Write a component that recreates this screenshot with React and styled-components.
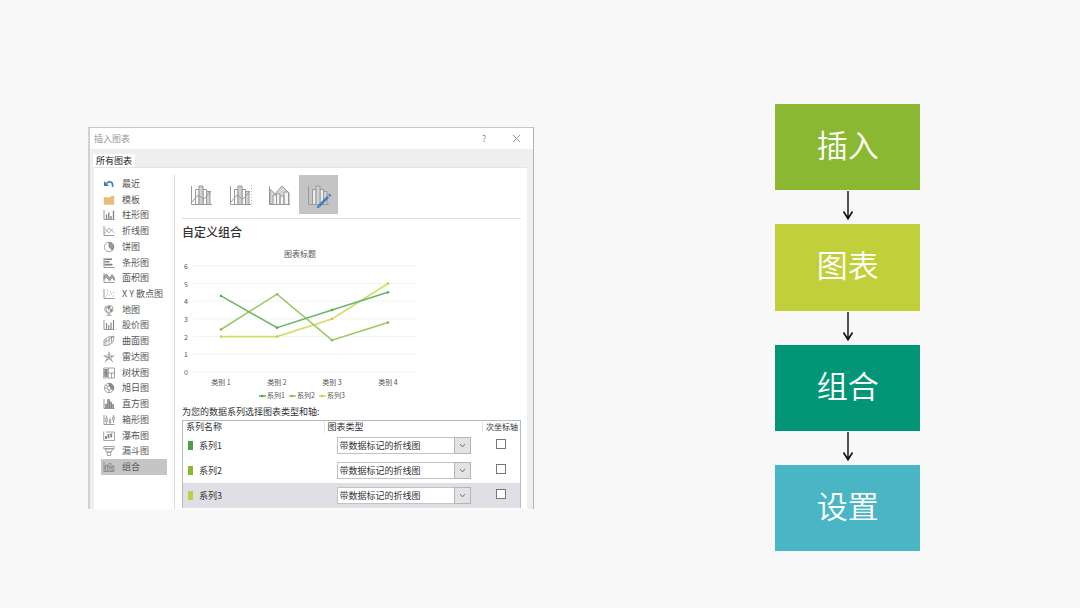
import React, {useState} from "react";
import styled, {createGlobalStyle} from "styled-components";

const icons = {
    recent: (
        <>
            <path d="M1 3v5h5z" fill="#3f7cbf" stroke="none"/>
            <path d="M3.500 5.500C6 2.600 10.300 3.600 9.600 8.800" stroke="#3f7cbf" strokeWidth="1.600"/>
        </>
    ),
    template: <path d="M1 10.500V3.500h6.500l1-1.500H11v8.500z" fill="#e9bd7c" stroke="#e3b46f" strokeWidth=".4"/>,
    column: <><Axes/><path d="M3.500 10V5.500M5.800 10V3.500M8 10V7M10.500 10V1.500" strokeWidth="1.300"/></>,
    line: <><Axes/><path d="M1.500 8.500L6 3l5.500 5M2 3.500l4 4.500 4-4.500" strokeWidth=".6"/></>,
    pie: <><circle cx="6" cy="6" r="4.700"/><path d="M6 1.300V6l3.400 3.300A4.700 4.700 0 0 0 6 1.300z" fill="#9a9a9a"/></>,
    bar: <><Axes/><path d="M1.500 2.200h7.500M1.500 4.700h5M1.500 7.600h8" strokeWidth="1.600"/></>,
    area: <><Axes/><path d="M1 4l2.500-2 3 4L9 2.500 11.500 6v2.500L9 5.500 6.500 9 3.500 5 1 7.500z" fill="#a5a5a5"/></>,
    scatter: <><Axes/><path d="M3 8h1M4 5h1M5.500 7h1M7 3.500h1M8 6h1M10 4.500h1M9.500 8h1M4 2.500h1"/></>,
    map: (
        <>
            <circle cx="6.500" cy="5" r="3.600"/>
            <path d="M4.500 3l2-1 1 2-2 1.500zM7 6l2-1v2l-1.500 1z" fill="#999"/>
            <path d="M2.700 2C.5 5 2.500 9.600 7 9.800M6 10v1.300M3.500 11.300h5"/>
        </>
    ),
    stock: <><Axes/><path d="M3.500 10V4M5.800 10V6M8 10V3.500M10.500 10V1" strokeWidth="1.100"/></>,
    surface: (
        <>
            <path d="M1 5l4-3 6-.7-1 5.700-4 3-5 .8z"/>
            <path d="M1.500 8c2-5 3 0 4.500-3s3-2 4.600-3M3 3.600v6.500M6 2.500v7.300M8.500 1.700v6"/>
        </>
    ),
    radar: (
        <>
            <path d="M6 .7v5.800M.7 4.600L6 6.500l5.300-1.900M2.200 10.900L6 6.500l3.800 4.400" strokeWidth=".9"/>
            <path d="M6 3l3.300 2.400L8 9 6 8 4 9 2.700 5.400z" strokeWidth=".5"/>
        </>
    ),
    treemap: (
        <>
            <path d="M.5 1h11v10H.5zM5.500 1v10M5.500 6h6M8.500 6v5"/>
            <path d="M1 1.500h4v9H1z" fill="#8f8f8f" stroke="#fff" strokeWidth=".4"/>
            <path d="M.5 6h5"/>
        </>
    ),
    sunburst: (
        <>
            <circle cx="6" cy="6" r="4.700"/><circle cx="6" cy="6" r="2"/>
            <path d="M6 1.300V4a2 2 0 0 1 1.800 2.500l2.400 1.600A4.700 4.700 0 0 0 6 1.300z" fill="#888"/>
            <path d="M1.300 6H4M6 8v2.700M2.700 2.700l2 2"/>
        </>
    ),
    histogram: <><Axes/><path d="M2.500 10V6h2v4M4.500 10V1.500h2V10M6.500 10V4h2v6M8.500 10V6.500h2V10" fill="#a5a5a5"/></>,
    box: <><Axes/><path d="M3.500 1.500V10M7 4v6M10.500 1v8"/><path d="M2.700 4h1.600v3.500H2.700zM6.200 6h1.600v2.500H6.200zM9.700 3h1.600v3H9.700z" fill="#fff"/></>,
    waterfall: <><path d="M.7 1.500v9h10.800V2H3"/><path d="M3 6v3M5.500 4v4M8.300 3.500v4" strokeWidth="1.800"/></>,
    funnel: <path d="M.8 1.500h10.400v2.300H.8zM2.200 3.800h7.600L8.300 7H3.700zM4.300 7h3.400v3.500H4.300z"/>,
    combo: <><Axes/><path d="M2.500 10V4h2v6M6 10V2.500h2V10M9.300 10V5h1.700v5M1 7l3-2.500L7 7l4-2.500"/></>,
};

const chartKinds = [
    ["recent", "最近"], ["template", "模板"], ["column", "柱形图"], ["line", "折线图"], ["pie", "饼图"],
    ["bar", "条形图"], ["area", "面积图"], ["scatter", "X Y 散点图"], ["map", "地图"], ["stock", "股价图"],
    ["surface", "曲面图"], ["radar", "雷达图"], ["treemap", "树状图"], ["sunburst", "旭日图"],
    ["histogram", "直方图"], ["box", "箱形图"], ["waterfall", "瀑布图"], ["funnel", "漏斗图"], ["combo", "组合"],
];

const series = [
    {name: "系列1", color: "#4da046", line: "#6cb468", values: [4.3, 2.5, 3.5, 4.5]},
    {name: "系列2", color: "#8ab833", line: "#9dc860", values: [2.4, 4.4, 1.8, 2.8]},
    {name: "系列3", color: "#c0cf3a", line: "#d3de6a", values: [2, 2, 3, 5]},
];

const steps = [
    {label: "插入", color: "#8ab833"},
    {label: "图表", color: "#c0cf3a"},
    {label: "组合", color: "#029676"},
    {label: "设置", color: "#4ab5c4"},
];

const comboNames = ["簇状柱形图 - 折线图", "簇状柱形图 - 次坐标轴上的折线图", "堆积面积图 - 簇状柱形图", "自定义组合"];

function Axes(){
    return <path d="M1 1v9.500h10.500" strokeWidth=".8"/>;
}

function ComboIcon({kind}){
    return(
        <svg width="22" height="22" viewBox="0 0 22 22" fill="none" stroke="#999" aria-hidden="true">
            <path d="M.5 2v18.500h20.500"/>
            {kind === 2 ? (
                <>
                    <path d="M1 5l5 5 7-8 7 7v11H1z" fill="#d6d6d6"/>
                    <path d="M4 20v-9h3.500v9M7.500 20V10H11v10M11 20v-8h4v8M15 20V8h4.500v12" fill="#f4f4f4"/>
                </>
            ) : (
                <>
                    <path d="M4.500 20V5.500h3.500V20M12 20V5.500h3.500V20" fill={kind === 3 ? "#eee" : "#fff"}/>
                    <path d="M8 20V2h4v18M15.500 20V7.500H19V20" fill="#d2d2d2"/>
                </>
            )}
            {kind < 2 && <path d="M1 18l6-7 6 4 7-8"/>}
            {kind === 1 && <path d="M21.500 1v19" stroke="#bbb" strokeDasharray="1 2"/>}
        </svg>
    );
}

function LineChart(){
    const xs = [39, 95, 150, 206];
    const yOf = (v)=> 127 - v * 17.7;
    return(
        <ChartSvg viewBox="0 0 238 159" role="img" aria-label="图表标题">
            <text x="118" y="12" fontSize="8" textAnchor="middle">图表标题</text>
            {[0, 1, 2, 3, 4, 5, 6].map((v)=>(
                <g key={v}>
                    <text x="4" y={yOf(v) + 3} fontSize="7" textAnchor="middle">{v}</text>
                    <path d={`M11 ${yOf(v)}H235`} stroke="#f3f3f3"/>
                </g>
            ))}
            {[...series].reverse().map((s)=>(
                <g key={s.name}>
                    <polyline points={s.values.map((v, i)=> `${xs[i]},${yOf(v)}`).join(" ")} fill="none" stroke={s.line} strokeWidth="1.600"/>
                    {s.values.map((v, i)=> <circle key={i} cx={xs[i]} cy={yOf(v)} r="1.200" fill={s.color}/>)}
                </g>
            ))}
            {xs.map((x, i)=>(
                <text key={x} x={x} y="140" fontSize="7" textAnchor="middle">类别 {i + 1}</text>
            ))}
            {series.map((s, i)=>(
                <g key={s.name}>
                    <path d={`M${77 + i * 30} 151h7`} stroke={s.line} strokeWidth="1.600"/>
                    <circle cx={80 + i * 30} cy="151" r="1.200" fill={s.color}/>
                    <text x={85 + i * 30} y="153" fontSize="7">{s.name}</text>
                </g>
            ))}
        </ChartSvg>
    );
}

function SeriesTable(){
    return(
        <Table aria-labelledby="series-caption">
            <thead>
                <tr>
                    <Th $width="42%">系列名称</Th>
                    <Th $width="47%">图表类型</Th>
                    <Th $width="11%">次坐标轴</Th>
                </tr>
            </thead>
            <tbody>
                {series.map((s, i)=>(
                    <Row key={s.name} $selected={i === 2}>
                        <td>
                            <SeriesName><Swatch $color={s.color}/>{s.name}</SeriesName>
                        </td>
                        <td>
                            <SelectBox>
                                <select aria-label={`${s.name} 图表类型`} defaultValue="带数据标记的折线图">
                                    <option>带数据标记的折线图</option>
                                    <option>折线图</option>
                                    <option>簇状柱形图</option>
                                </select>
                                <svg viewBox="0 0 16 14" aria-hidden="true">
                                    <path d="M5.500 5.500l2.500 3 2.500-3" fill="none" stroke="#666"/>
                                </svg>
                            </SelectBox>
                        </td>
                        <td><Check type="checkbox" aria-label={`${s.name} 次坐标轴`}/></td>
                    </Row>
                ))}
            </tbody>
        </Table>
    );
}

function InsertChartDialog(){
    const [kind, setKind] = useState("combo");
    const [combo, setCombo] = useState(3);
    return(
        <Dialog>
            <TitleBar>
                <h1>插入图表</h1>
                <TitleButton aria-label="帮助">?</TitleButton>
                <TitleButton aria-label="关闭">
                    <svg width="9" height="9" viewBox="0 0 9 9" aria-hidden="true">
                        <path d="M1 1l7 7M8 1L1 8" stroke="#999"/>
                    </svg>
                </TitleButton>
            </TitleBar>
            <TabRow><Tab>所有图表</Tab></TabRow>
            <Panel>
                <KindList>
                    {chartKinds.map(([id, label])=>(
                        <KindButton key={id} $active={kind === id} onClick={()=> setKind(id)}>
                            <svg width="12" height="12" viewBox="0 0 12 12" fill="none" stroke="#808080" strokeWidth=".7" aria-hidden="true">
                                {icons[id]}
                            </svg>
                            {label}
                        </KindButton>
                    ))}
                </KindList>
                <Content>
                    <ComboBar>
                        {comboNames.map((name, i)=>(
                            <ComboButton key={name} aria-label={name} $active={combo === i} onClick={()=> setCombo(i)}>
                                <ComboIcon kind={i}/>
                                {i === 3 && (
                                    <Pencil viewBox="0 0 16 16" aria-hidden="true">
                                        <path d="M3 13L12 4" stroke="#3f80c4" strokeWidth="2.600"/>
                                        <path d="M13 3l1.500-1.500" stroke="#3f80c4" strokeWidth="2.600"/>
                                        <path d="M.8 15.200l.8-3.200 2.400 2.400z" fill="#3f80c4"/>
                                    </Pencil>
                                )}
                            </ComboButton>
                        ))}
                    </ComboBar>
                    <h2>{comboNames[combo]}</h2>
                    <LineChart/>
                    <p id="series-caption">为您的数据系列选择图表类型和轴:</p>
                    <SeriesTable/>
                </Content>
            </Panel>
        </Dialog>
    );
}

function App(){
    return(
        <>
            <GlobalStyle/>
            <Page>
                <InsertChartDialog/>
                <Steps>
                    {steps.map((step, i)=>(
                        <React.Fragment key={step.label}>
                            {i > 0 && (
                                <Arrow viewBox="0 0 14 34" aria-hidden="true">
                                    <path d="M7 1v27" stroke="#333" strokeWidth="1.700"/>
                                    <path d="M2.500 21.500l4.500 7 4.500-7" fill="none" stroke="#111" strokeWidth="1.600"/>
                                    <path d="M4 24.500L7 26l3-1.500L7 30z" fill="#111"/>
                                </Arrow>
                            )}
                            <Step $color={step.color}>{step.label}</Step>
                        </React.Fragment>
                    ))}
                </Steps>
            </Page>
        </>
    );
}

const GlobalStyle = createGlobalStyle`
    *{
        box-sizing: border-box;
    }
    body{
        margin: 0;
        background-color: #f8f8f8;
        font-family: "Noto Sans CJK SC", sans-serif;
    }
    h1, h2, p{
        margin: 0;
        font-weight: 400;
    }
    button, select{
        font-family: inherit;
        border: none;
        padding: 0;
        background: none;
    }
`;

const Page = styled.main`
    display: grid;
    grid-template-columns: 37fr 20fr 12fr;
    align-items: start;
    padding: 104px 160px 56px 88px;
`;

const Dialog = styled.section`
    margin-top: 23px;
    border-top: 1px solid #c6c6c6;
    border-left: 2px solid #d2d2d2;
    border-right: 1px solid #a9b8b0;
    background-color: #efefef;
    font-size: 8px;
`;

const TitleBar = styled.header`
    display: flex;
    align-items: center;
    height: 21px;
    padding: 0 1px 0 4px;
    background-color: white;
    h1{
        flex: 1;
        font-size: 9px;
        color: #999;
    }
`;

const TitleButton = styled.button`
    display: flex;
    align-items: center;
    justify-content: center;
    width: 32px;
    height: 20px;
    font-size: 9px;
    color: #888;
`;

const TabRow = styled.div`
    display: flex;
    padding: 5px 3px 0;
`;

const Tab = styled.button`
    height: 13px;
    padding: 0 3px;
    background-color: white;
    font-size: 9px;
    line-height: 13px;
    color: #222;
`;

const Panel = styled.div`
    display: flex;
    margin: 0 6px 0 4px;
    padding-top: 7px;
    border-top: 1px solid #e4e4e4;
    background-color: white;
`;

const KindList = styled.nav`
    display: flex;
    flex-direction: column;
    flex: none;
    width: 81px;
    padding: 1px 7px 34px;
    border-right: 1px solid #dcdcdc;
`;

const KindButton = styled.button`
    display: flex;
    align-items: center;
    flex: 1;
    gap: 7px;
    padding-left: 2px;
    background-color: ${(props)=> props.$active ? "#c5c5c5" : "transparent"};
    font-size: 9px;
    line-height: 12px;
    color: #555;
    white-space: nowrap;
    svg{
        flex: none;
    }
`;

const Content = styled.div`
    flex: 1;
    min-width: 0;
    padding: 0 6px 1px 7px;
    h2{
        font-size: 12px;
        line-height: 26px;
        font-weight: 500;
        color: #333;
    }
    p{
        font-size: 9px;
        line-height: 16px;
        color: #333;
    }
`;

const ComboBar = styled.div`
    display: flex;
    padding-bottom: 4px;
    border-bottom: 1px solid #dedede;
`;

const ComboButton = styled.button`
    position: relative;
    display: flex;
    align-items: center;
    justify-content: center;
    width: 39px;
    height: 39px;
    background-color: ${(props)=> props.$active ? "#c4c4c4" : "transparent"};
`;

const Pencil = styled.svg`
    position: absolute;
    right: 6px;
    bottom: 5px;
    width: 16px;
    height: 16px;
`;

const ChartSvg = styled.svg`
    display: block;
    width: 238px;
    max-width: 100%;
    fill: #555;
`;

const Table = styled.table`
    width: 100%;
    table-layout: fixed;
    border-collapse: separate;
    border-spacing: 0;
    border: 1px solid #b9b9c0;
    border-bottom: none;
    color: #333;
    td{
        padding: 0;
    }
`;

const Th = styled.th`
    width: ${(props)=> props.$width};
    height: 12px;
    padding: 0 0 0 3px;
    border-right: 1px solid #e4e4e4;
    font-size: 9px;
    line-height: 12px;
    font-weight: 400;
    text-align: left;
    white-space: nowrap;
    &:last-child{
        border-right: none;
        font-size: 8px;
    }
`;

const Row = styled.tr`
    height: 25px;
    background-color: ${(props)=> props.$selected ? "#e0dfe5" : "white"};
`;

const SeriesName = styled.div`
    display: flex;
    align-items: center;
    gap: 6px;
    padding-left: 5px;
    font-size: 9px;
    line-height: 12px;
`;

const Swatch = styled.span`
    width: 5px;
    height: 9px;
    background-color: ${(props)=> props.$color};
`;

const SelectBox = styled.div`
    position: relative;
    width: 134px;
    height: 17px;
    margin-left: 12px;
    select{
        appearance: none;
        width: 100%;
        height: 100%;
        padding: 0 20px 0 2px;
        border: 1px solid #c3c3c6;
        background-color: white;
        font-size: 9px;
        color: #333;
    }
    svg{
        position: absolute;
        top: 0;
        right: 0;
        width: 17px;
        height: 17px;
        border: 1px solid #b5b5b8;
        background-color: #e3e3e3;
        pointer-events: none;
    }
`;

const Check = styled.input`
    appearance: none;
    display: block;
    width: 10px;
    height: 10px;
    margin: 0 0 3px 13px;
    border: 1px solid #777;
    background-color: white;
    &:checked{
        background-color: #777;
    }
`;

const Steps = styled.div`
    grid-column: 3;
    display: flex;
    flex-direction: column;
    align-items: center;
    min-height: 447px;
`;

const Step = styled.div`
    display: flex;
    align-items: center;
    justify-content: center;
    flex: 1;
    width: 100%;
    padding-bottom: 6px;
    background-color: ${(props)=> props.$color};
    color: white;
    font-size: 31px;
    line-height: 46px;
    font-weight: 350;
`;

const Arrow = styled.svg`
    flex: none;
    width: 14px;
    height: 34px;
`;

export default App;
